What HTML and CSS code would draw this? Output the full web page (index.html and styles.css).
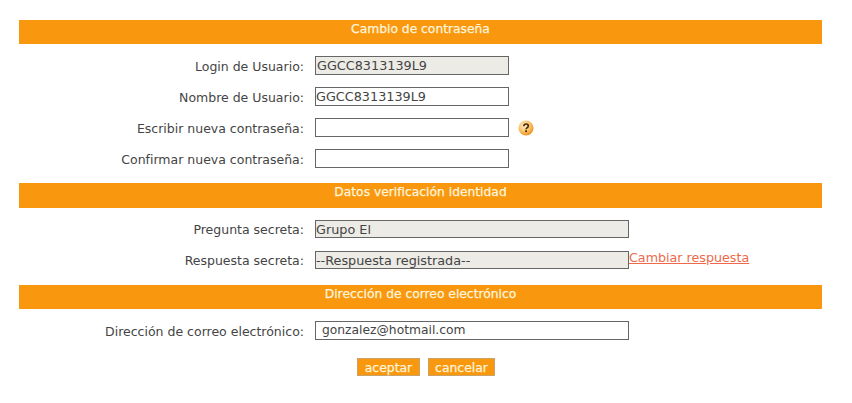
FILE: index.html
```html
<!DOCTYPE html>
<html lang="es">
<head>
  <meta charset="UTF-8">
  <title>Cambio de contraseña</title>
  <link rel="stylesheet" href="styles.css">
</head>
<body>
  <form class="container">
    <h2 class="section-title">Cambio de contraseña</h2>
    <div class="rows rows-password">
      <div class="row">
        <label>Login de Usuario:</label>
        <input type="text" class="short readonly" value="GGCC8313139L9" readonly>
      </div>
      <div class="row">
        <label>Nombre de Usuario:</label>
        <input type="text" class="short flush" value="GGCC8313139L9">
      </div>
      <div class="row">
        <label>Escribir nueva contraseña:</label>
        <input type="password" class="short">
        <svg class="help-icon" width="16" height="16" viewBox="0 0 16 16">
          <defs>
            <radialGradient id="helpFill" cx="0.4" cy="0.35" r="0.7">
              <stop offset="0" stop-color="#fff0cc"/>
              <stop offset="0.55" stop-color="#fbc26a"/>
              <stop offset="1" stop-color="#ec8c14"/>
            </radialGradient>
          </defs>
          <circle cx="8" cy="8" r="7.5" fill="url(#helpFill)"/>
          <path d="M5.8 6.2c0-1.4 1-2.2 2.3-2.2s2.2.8 2.2 1.9c0 1.7-2.2 1.7-2.2 3.4" fill="none" stroke="#4a2a08" stroke-width="1.7"/>
          <rect x="7.2" y="10.3" width="1.8" height="1.8" fill="#4a2a08"/>
        </svg>
      </div>
      <div class="row">
        <label>Confirmar nueva contraseña:</label>
        <input type="password" class="short">
      </div>
    </div>

    <h2 class="section-title tall">Datos verificación identidad</h2>
    <div class="rows rows-identity">
      <div class="row">
        <label>Pregunta secreta:</label>
        <input type="text" class="long slim flush readonly" value="Grupo El" readonly>
      </div>
      <div class="row">
        <label>Respuesta secreta:</label>
        <input type="text" class="long slim flush readonly" value="--Respuesta registrada--" readonly>
        <a href="#" class="change-link">Cambiar respuesta</a>
      </div>
    </div>

    <h2 class="section-title">Dirección de correo electrónico</h2>
    <div class="rows rows-email">
      <div class="row">
        <label>Dirección de correo electrónico:</label>
        <input type="text" class="long email" value="gonzalez@hotmail.com">
      </div>
    </div>

    <div class="buttons">
      <button type="submit" class="btn-accept">aceptar</button>
      <button type="button" class="btn-cancel">cancelar</button>
    </div>
  </form>
</body>
</html>
```

FILE: styles.css
```css
body {
  margin: 0;
  background-color: #fff;
  font-family: "DejaVu Sans", Verdana, sans-serif;
  font-size: 12.5px;
  color: #444;
}
.container {
  width: 803px;
  margin-left: 19px;
  padding-top: 20px;
}
.section-title {
  margin: 0;
  height: 24px;
  line-height: 19px;
  background-color: #f9980f;
  color: #fff5dc;
  font-size: 12.3px;
  font-weight: normal;
  text-align: center;
  -webkit-text-stroke: 0.25px #fff5dc;
}
.section-title.tall {
  height: 25px;
}
.rows {
  display: flex;
  flex-direction: column;
  gap: 12px;
  padding-top: 12px;
}
.rows-password {
  padding-bottom: 15px;
}
.rows-identity {
  gap: 13px;
  padding-bottom: 16px;
}
.row {
  display: flex;
  align-items: center;
}
.row label {
  width: 285px;
  margin-right: 11px;
  padding-top: 1px;
  text-align: right;
  white-space: nowrap;
}
input {
  box-sizing: border-box;
  height: 19px;
  margin: 0;
  padding: 0 1px;
  border: 1px solid #666;
  border-radius: 0;
  background-color: #fff;
  font-family: inherit;
  font-size: 12.8px;
  color: #444;
}
.short {
  width: 194px;
}
.long {
  width: 314px;
}
.slim {
  height: 18px;
}
.flush {
  padding-left: 0;
}
.readonly {
  background-color: #edebe6;
}
.email {
  padding: 0 1px 2px 6px;
  font-size: 12.3px;
}
.help-icon {
  margin-left: 9px;
}
.change-link {
  align-self: flex-start;
  font-size: 12.7px;
  line-height: 14px;
  color: #ee6a4a;
  white-space: nowrap;
}
.buttons {
  display: flex;
  justify-content: center;
  gap: 8px;
  padding-top: 18px;
  padding-left: 11px;
}
.buttons button {
  box-sizing: border-box;
  height: 18px;
  padding: 0;
  border: 1px solid #c9a36a;
  border-radius: 0;
  background-color: #f9980f;
  color: #fff5dc;
  font-family: inherit;
  font-size: 12.4px;
  -webkit-text-stroke: 0.25px #fff5dc;
}
.btn-accept {
  width: 63px;
}
.btn-cancel {
  width: 67px;
}
```
